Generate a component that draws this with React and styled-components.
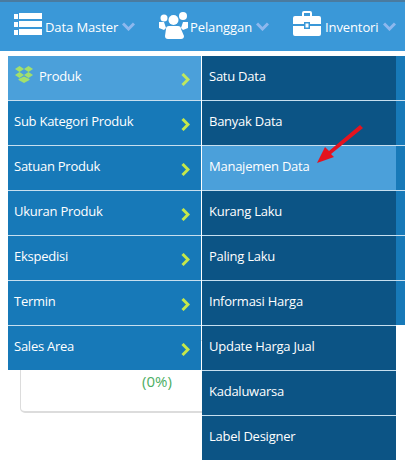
import React from "react";
import styled, { createGlobalStyle } from "styled-components";

const GlobalStyle = createGlobalStyle`
  html, body {
    margin: 0;
    padding: 0;
    background: #ffffff;
  }
  body {
    font-family: "Open Sans", "Noto Sans", sans-serif;
    overflow: hidden;
  }
`;

const Page = styled.div`
  width: 405px;
  height: 471px;
  position: relative;
  overflow: hidden;
  background: #ffffff;
`;
const Navbar = styled.div`
  height: 49px;
  display: flex;
  align-items: center;
  border-top: 2px solid #4a7ba0;
  background: #3a98d8;
  margin-bottom: 5px;
`;
const NavItem = styled.div`
  display: flex;
  align-items: center;
  box-sizing: border-box;
  flex: none;
  width: ${(p) => p.$width}px;
  padding-left: ${(p) => p.$pad}px;
  color: #ffffff;
  font-size: 13px;
  letter-spacing: -0.1px;
  white-space: nowrap;
`;
const NavIcon = styled.svg`
  flex: none;
  margin-top: ${(p) => p.$lift}px;
  fill: #ffffff;
`;
const NavLabel = styled.span`
  margin-left: ${(p) => p.$gap}px;
`;
const Caret = styled.svg`
  width: 13px;
  height: 9px;
  margin-left: 4px;
  fill: none;
  stroke: #8db8ee;
  stroke-width: 3;
`;
const Menus = styled.div`
  display: flex;
  align-items: flex-start;
  padding-left: 8px;
`;
const Column = styled.div`
  width: ${(p) => p.$width}px;
  display: flex;
  flex-direction: column;
  margin-right: ${(p) => p.$gap || 0}px;
`;
const Row = styled.div`
  height: 44px;
  display: flex;
  align-items: center;
  padding-left: ${(p) => p.$pad}px;
  padding-right: 11px;
  border-bottom: 1px solid #c7dfef;
  background: ${(p) => p.$bg};
  color: #ffffff;
  font-size: 13px;
  letter-spacing: -0.25px;
  white-space: nowrap;

  &:last-child {
    border-bottom: none;
  }
`;
const RowLabel = styled.span`
  flex: 1;
  margin-top: -5px;
`;
const Arrow = styled.svg`
  width: 9px;
  height: 13px;
  margin-top: 2px;
  fill: none;
  stroke: ${(p) => p.$color};
  stroke-width: 3;
`;
const DropIcon = styled.svg`
  width: 18px;
  height: 17px;
  margin: -7px 6px 0 0;
  fill: #a3e06c;
`;
const Strip = styled.div`
  position: absolute;
  left: 396px;
  top: 56px;
  width: 9px;
  height: 269px;
  background: #1779b8;
`;
const Divider = styled.div`
  position: absolute;
  left: 396px;
  top: ${(p) => p.$top}px;
  width: 9px;
  height: 1px;
  background: #c7dfef;
`;
const Card = styled.div`
  position: absolute;
  left: 20px;
  top: 340px;
  width: 200px;
  height: 73px;
  box-sizing: border-box;
  border: 1px solid #dcdcdc;
  border-bottom-width: 2px;
  border-radius: 5px;
  background: #ffffff;
`;
const Percent = styled.div`
  position: absolute;
  left: 121px;
  top: 30px;
  color: #4cae63;
  font-size: 15px;
`;
const Layered = styled.div`
  position: relative;
  z-index: 1;
`;
const Pointer = styled.svg`
  position: absolute;
  left: 312px;
  top: 122px;
  z-index: 2;
`;

const leftItems = ["Sub Kategori Produk", "Satuan Produk", "Ukuran Produk", "Ekspedisi", "Termin", "Sales Area"];
const rightItems = ["Satu Data", "Banyak Data", "Manajemen Data", "Kurang Laku", "Paling Laku", "Informasi Harga", "Update Harga Jual", "Kadaluwarsa", "Label Designer"];

const ListIcon = () => (
  <NavIcon width="28" height="23" viewBox="0 0 28 23" $lift={-5}>
    <rect x="0" y="1" width="4" height="5" />
    <rect x="0" y="9" width="4" height="5" />
    <rect x="0" y="17" width="4" height="5" />
    <rect x="5" y="0" width="23" height="6" />
    <rect x="5" y="8" width="23" height="6" />
    <rect x="5" y="16" width="23" height="6" />
  </NavIcon>
);

const UsersIcon = () => (
  <NavIcon width="29" height="29" viewBox="0 0 29 29" $lift={-3}>
    <circle cx="5" cy="7" r="3.500" />
    <circle cx="24" cy="5" r="4" />
    <circle cx="14.500" cy="9" r="5" />
    <path d="M0 11 L5 11 L7 17 L5 19 L0 17 Z" />
    <path d="M29 11 L24 11 L22 17 L24 19 L29 17 Z" />
    <path d="M7 18 Q7 15 10 15 L19 15 Q22 15 22 18 L25 25 Q25 28 22 28 L9 28 Q6 28 6 25 Z" />
  </NavIcon>
);

const CaseIcon = () => (
  <NavIcon width="28" height="25" viewBox="0 0 28 25" $lift={-7}>
    <path d="M9 5 L9 2 Q9 0 11 0 L17 0 Q19 0 19 2 L19 5 L17 5 L17 2 L11 2 L11 5 Z" />
    <path d="M2 5 L26 5 Q28 5 28 7 L28 13 L17 13 L17 11 L11 11 L11 13 L0 13 L0 7 Q0 5 2 5 Z" />
    <path d="M0 15 L11 15 L11 18 L17 18 L17 15 L28 15 L28 23 Q28 25 26 25 L2 25 Q0 25 0 23 Z" />
    <rect x="12.500" y="12.500" width="3" height="4" />
  </NavIcon>
);

const Chevron = () => (
  <Caret viewBox="0 0 13 9">
    <path d="M1 1.500 L6.500 7 L12 1.500" />
  </Caret>
);

const RowArrow = ({ color }) => (
  <Arrow viewBox="0 0 9 13" $color={color}>
    <path d="M1.500 1 L7 6.500 L1.500 12" />
  </Arrow>
);

export default function App() {
  return (
    <Page>
      <GlobalStyle />
      <Navbar>
        <NavItem $width={159} $pad={14}>
          <ListIcon />
          <NavLabel $gap={3}>Data Master</NavLabel>
          <Chevron />
        </NavItem>
        <NavItem $width={134} $pad={0}>
          <UsersIcon />
          <NavLabel $gap={2}>Pelanggan</NavLabel>
          <Chevron />
        </NavItem>
        <NavItem $width={112} $pad={0}>
          <CaseIcon />
          <NavLabel $gap={4}>Inventori</NavLabel>
          <Chevron />
        </NavItem>
      </Navbar>
      <Strip />
      {[100, 145, 190, 235, 280].map((top) => (
        <Divider key={top} $top={top} />
      ))}
      <Card>
        <Percent>(0%)</Percent>
      </Card>
      <Layered>
        <Menus>
          <Column $width={193} $gap={1}>
            <Row $pad={7} $bg="#4ba0da">
              <DropIcon viewBox="0 0 18 17">
                <path d="M4.500 0 L9 3 L4.500 6 L0 3 Z" />
                <path d="M13.500 0 L18 3 L13.500 6 L9 3 Z" />
                <path d="M4.500 6 L9 9 L4.500 12 L0 9 Z" />
                <path d="M13.500 6 L18 9 L13.500 12 L9 9 Z" />
                <path d="M3.500 13 L9 10.500 L14.500 13 L14.500 14 L9 17 L3.500 14 Z" />
              </DropIcon>
              <RowLabel>Produk</RowLabel>
              <RowArrow color="#bfe85e" />
            </Row>
            {leftItems.map((label) => (
              <Row key={label} $pad={6} $bg="#1779b8">
                <RowLabel>{label}</RowLabel>
                <RowArrow color="#c5e84a" />
              </Row>
            ))}
          </Column>
          <Column $width={194}>
            {rightItems.map((label) => (
              <Row key={label} $pad={7} $bg={label === "Manajemen Data" ? "#4ba0da" : "#0c5485"}>
                <RowLabel>{label}</RowLabel>
              </Row>
            ))}
          </Column>
        </Menus>
      </Layered>
      <Pointer width="52" height="45" viewBox="0 0 52 45">
        <path d="M5 41 L13 25 L17 29 L48 3 L51 6 L19 32 L22 35 Z" fill="#e4131f" />
      </Pointer>
    </Page>
  );
}
